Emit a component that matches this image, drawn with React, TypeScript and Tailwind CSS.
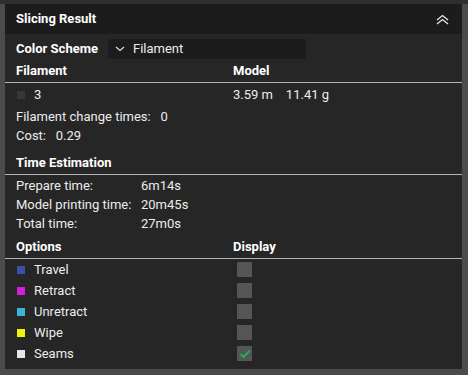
import React from 'react';

type Option = { name: string; color: string; shown: boolean };

const options: Option[] = [
  { name: 'Travel', color: 'bg-[#3a4fa8]', shown: false },
  { name: 'Retract', color: 'bg-[#d21fd8]', shown: false },
  { name: 'Unretract', color: 'bg-[#3fb0d6]', shown: false },
  { name: 'Wipe', color: 'bg-[#f2f20a]', shown: false },
  { name: 'Seams', color: 'bg-[#e6e6e6]', shown: true },
];

const times = [
  { label: 'Prepare time:', value: '6m14s' },
  { label: 'Model printing time:', value: '20m45s' },
  { label: 'Total time:', value: '27m0s' },
];

function Check({ on }: { on: boolean }) {
  return (
    <div className="w-[15px] h-[15px] bg-[#555555] flex items-center justify-center">
      {on && (
        <svg width="12" height="10" viewBox="0 0 12 10">
          <path d="M1.5 5.2 L4.5 8 L10.5 1.8" stroke="#1db34f" strokeWidth="2" fill="none" />
        </svg>
      )}
    </div>
  );
}

export default function App() {
  return (
    <div
      className="w-[468px] h-[375px] bg-[#4a4a4f] flex flex-col text-[13px] text-[#ececec] overflow-hidden"
      style={{ fontFamily: 'Roboto, "Noto Sans", sans-serif' }}
    >
      <div className="h-[4px] bg-[#2e2e30] shrink-0" />
      <div className="flex h-[365px]">
        <div className="w-[5px] shrink-0" />
        <div className="w-[457px] bg-[#262626] flex flex-col">
          {/* Header */}
          <div className="h-[30px] bg-[#1c1c1c] flex items-center justify-between pl-[11px] pr-[13px]">
            <span className="font-bold text-white text-[13px]">Slicing Result</span>
            <svg width="13" height="11" viewBox="0 0 13 11">
              <path d="M1 6 L6.5 1.5 L12 6 M1 10 L6.5 5.5 L12 10" stroke="#e8e8e8" strokeWidth="1.3" fill="none" />
            </svg>
          </div>

          {/* Color scheme */}
          <div className="flex items-center pl-[11px] mt-[5px] h-[19px]">
            <span className="font-bold w-[92px] text-white">Color Scheme</span>
            <div className="w-[198px] h-[20px] bg-[#1c1c1c] rounded-[3px] flex items-center pl-[7px] gap-[8px]">
              <svg width="10" height="6" viewBox="0 0 10 6">
                <path d="M1 1 L5 4.5 L9 1" stroke="#e0e0e0" strokeWidth="1.2" fill="none" />
              </svg>
              <span>Filament</span>
            </div>
          </div>

          {/* Filament / Model */}
          <div className="flex pl-[11px] mt-[4px] h-[18px] items-center font-bold text-white">
            <span className="w-[217px]">Filament</span>
            <span>Model</span>
          </div>
          <div className="h-[1px] bg-[#b4b4b4] mt-[2px]" />
          <div className="flex pl-[12px] mt-[2px] h-[19px] items-center">
            <div className="w-[216px] flex items-center gap-[9px]">
              <div className="w-[8px] h-[8px] bg-[#363636]" />
              <span>3</span>
            </div>
            <span className="whitespace-pre">3.59 m    11.41 g</span>
          </div>
          <div className="pl-[11px] mt-[3px] h-[19px] flex items-center whitespace-pre">Filament change times:   0</div>
          <div className="pl-[11px] h-[19px] flex items-center whitespace-pre">Cost:   0.29</div>

          {/* Time estimation */}
          <div className="pl-[11px] mt-[9px] h-[18px] flex items-center font-bold text-white">Time Estimation</div>
          <div className="h-[1px] bg-[#b4b4b4] mt-[2px]" />
          <div className="flex flex-col pl-[11px] mt-[1px]">
            {times.map((t) => (
              <div key={t.label} className="flex h-[19px] items-center">
                <span className="w-[125px]">{t.label}</span>
                <span>{t.value}</span>
              </div>
            ))}
          </div>

          {/* Options */}
          <div className="flex pl-[11px] mt-[5px] h-[18px] items-center font-bold text-white">
            <span className="w-[217px]">Options</span>
            <span>Display</span>
          </div>
          <div className="h-[1px] bg-[#b4b4b4] mt-[2px]" />
          <div className="flex flex-col pl-[12px]">
            {options.map((o) => (
              <div key={o.name} className="flex h-[21px] items-center">
                <div className="w-[220px] flex items-center gap-[9px]">
                  <div className={`w-[8px] h-[8px] ${o.color}`} />
                  <span>{o.name}</span>
                </div>
                <Check on={o.shown} />
              </div>
            ))}
          </div>
        </div>
        <div className="flex-1" />
      </div>
    </div>
  );
}
